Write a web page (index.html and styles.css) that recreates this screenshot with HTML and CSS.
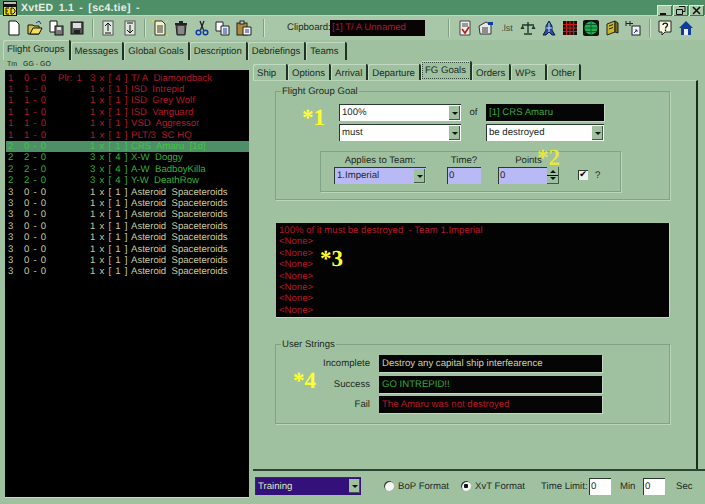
FILE: index.html
```html
<!DOCTYPE html>
<html>
<head>
  <title>XvtED</title>
  <link rel="stylesheet" href="styles.css">
</head>
<body>
  <div class="titlebar">
    <svg class="app-icon" width="14" height="15" viewBox="0 0 14 15"><rect width="14" height="15" fill="#111"/><rect x="1" y="6" width="12" height="8" fill="#e8d820"/><rect x="1" y="1" width="12" height="2" fill="#bbb"/><path d="M3 7v6M3 7h3M3 10h2M3 13h3M8 7v6h2l2-2V9l-2-2z" stroke="#111" fill="none"/></svg>
    <span class="title-text">XvtED 1.1 - [sc4.tie] -</span>
    <div class="win-btns">
      <div class="win-btn"><svg width="15" height="11" viewBox="0 0 15 11"><rect x="3" y="8" width="6" height="2" fill="#111"/></svg></div>
      <div class="win-btn"><svg width="15" height="11" viewBox="0 0 15 11"><path d="M6 1.5h6v5h-2M3.5 4.5h6v5h-6z" stroke="#111" fill="none"/></svg></div>
      <div class="win-btn win-close"><svg width="15" height="11" viewBox="0 0 15 11"><path d="M4 2l7 7M11 2l-7 7" stroke="#111" stroke-width="1.6"/></svg></div>
    </div>
  </div>

  <div class="toolbar">
    <div class="tool-group g-file">
      <svg class="ico" viewBox="0 0 16 16"><path d="M3 1h7l3 3v11H3z" fill="#fff" stroke="#111"/></svg>
      <svg class="ico" viewBox="0 0 16 16"><path d="M1 14V5h5l1 1h5v8z" fill="#d8c040" stroke="#111"/><path d="M3 14l3-6h9l-3 6z" fill="#f0e060" stroke="#111"/><path d="M9 3l3-2 2 3" stroke="#123c9c" fill="none"/></svg>
      <svg class="ico" viewBox="0 0 16 16"><path d="M2 1h7v11H2z" fill="#fff" stroke="#111"/><rect x="7" y="6" width="8" height="9" fill="#777" stroke="#111"/><rect x="9" y="7" width="4" height="3" fill="#ddd"/></svg>
      <svg class="ico" viewBox="0 0 16 16"><rect x="2" y="2" width="12" height="12" fill="#555" stroke="#111"/><rect x="4" y="3" width="8" height="5" fill="#ddd"/><rect x="5" y="10" width="6" height="4" fill="#222"/></svg>
    </div>
    <div class="tool-sep"></div>
    <div class="tool-group g-move">
      <svg class="ico" viewBox="0 0 16 16"><rect x="3" y="1" width="10" height="14" fill="#dfe8df" stroke="#555"/><path d="M8 3v8M5 6l3-3 3 3M5 13h6" stroke="#111" fill="none"/></svg>
      <svg class="ico" viewBox="0 0 16 16"><rect x="3" y="1" width="10" height="14" fill="#dfe8df" stroke="#555"/><path d="M8 5v8M5 10l3 3 3-3M5 3h6" stroke="#111" fill="none"/></svg>
    </div>
    <div class="tool-sep"></div>
    <div class="tool-group g-edit">
      <svg class="ico" viewBox="0 0 16 16"><path d="M0 0l3 3M16 0l-3 3M0 16l3-3M16 16l-3-3" stroke="#e8e040"/><path d="M3 1h7l3 3v11H3z" fill="#f2f2d0" stroke="#333"/><path d="M5 6h6M5 8h6M5 10h6M5 12h6" stroke="#333"/></svg>
      <svg class="ico" viewBox="0 0 16 16"><path d="M6 2h4M2 4h12" stroke="#222" stroke-width="2"/><path d="M3 5h10l-1 10H4z" fill="#555" stroke="#222"/><path d="M6 6v8M8 6v8M10 6v8" stroke="#bbb"/></svg>
      <svg class="ico" viewBox="0 0 16 16"><path d="M6 1l3.500 9M10 1l-3.500 9" stroke="#222" stroke-width="1.300"/><circle cx="4.500" cy="12.500" r="2.300" fill="none" stroke="#123c9c" stroke-width="1.500"/><circle cx="11.500" cy="12.500" r="2.300" fill="none" stroke="#123c9c" stroke-width="1.500"/></svg>
      <svg class="ico" viewBox="0 0 16 16"><path d="M1 2h7v9H1z" fill="#fff" stroke="#222"/><path d="M6 6h8v9H6z" fill="#e8eef0" stroke="#222"/><path d="M8 9h4M8 11h4M8 13h4" stroke="#123c9c"/></svg>
      <svg class="ico" viewBox="0 0 16 16"><rect x="1" y="3" width="10" height="12" fill="#b08a3a" stroke="#222"/><rect x="4" y="1" width="4" height="3" fill="#ccc" stroke="#222"/><path d="M7 7h8v8H7z" fill="#f4f4f4" stroke="#222"/><path d="M9 10h4M9 12h4" stroke="#123c9c"/></svg>
    </div>
    <div class="tool-sep"></div>
    <span class="clip-label">Clipboard:</span>
    <div class="clip-box">[1] T/ A Unnamed</div>
    <div class="tool-sep sep-clip"></div>
    <div class="tool-group g-view">
      <svg class="ico" viewBox="0 0 16 16"><path d="M3 1h10v14H3z" fill="#eee" stroke="#444"/><path d="M5 4h6M5 6h6" stroke="#444"/><path d="M5 9l3 4 4-6" stroke="#c01818" stroke-width="1.600" fill="none"/></svg>
      <svg class="ico" viewBox="0 0 16 16"><path d="M1 6l7-4 5 3v9H2z" fill="#e8e8e8" stroke="#333"/><path d="M4 8h6M4 10h6M4 12h6" stroke="#333"/><path d="M10 2h5v3h-5z" fill="#123c9c"/></svg>
      <span class="lst">.lst</span>
      <svg class="ico" viewBox="0 0 16 16"><path d="M8 2v11M4 14h8M2 5h12" stroke="#1c3a28" stroke-width="1.400"/><path d="M0.500 9l2-4 2 4zM11.500 9l2-4 2 4z" fill="#1c3a28"/></svg>
      <svg class="ico" viewBox="0 0 16 16"><path d="M8 1l3 5v4l3 5h-3l-3-3-3 3H2l3-5V6z" fill="#2a4cb0" stroke="#123"/><path d="M8 3v9M5 8h6" stroke="#cde"/></svg>
      <svg class="ico" viewBox="0 0 16 16"><rect x="1" y="1" width="14" height="14" fill="#111"/><path d="M1 4.500h14M1 8h14M1 11.500h14M4.500 1v14M8 1v14M11.500 1v14" stroke="#d01818" stroke-width="1.200"/></svg>
      <svg class="ico" viewBox="0 0 16 16"><rect width="16" height="16" rx="2" fill="#111"/><circle cx="8" cy="8" r="6.500" fill="#20b050"/><path d="M1.500 8h13M8 1.500v13M3 4.500h10M3 11.500h10" stroke="#0c5c2c"/></svg>
      <svg class="ico" viewBox="0 0 16 16"><path d="M3 4l8-3v11l-8 3z" fill="#c8b828" stroke="#222"/><path d="M11 1l3 2v10l-3-1z" fill="#7a6c14" stroke="#222"/><path d="M5 6l4-1.500M5 9l4-1.500" stroke="#222"/></svg>
      <svg class="ico" viewBox="0 0 16 16"><path d="M1 1v5M5 1v5M1 3.500h4M5 3.500h3" stroke="#222"/><rect x="7" y="6" width="8" height="9" fill="#f2f2f2" stroke="#222"/><path d="M9 13l3-3M10 10h2v2" stroke="#123c9c" fill="none"/></svg>
    </div>
    <div class="tool-sep"></div>
    <div class="tool-group g-help">
      <svg class="ico" viewBox="0 0 16 16"><path d="M2 1h12v11H8l-3 3v-3H2z" fill="#f8f8e0" stroke="#222"/><path d="M6 5c0-2.500 4.500-2.500 4.500 0 0 1.500-2 1.500-2 3.500M8.500 9.500v1.500" stroke="#111" stroke-width="1.300" fill="none"/></svg>
      <svg class="ico" viewBox="0 0 16 16"><path d="M8 1L1 8h2v7h10V8h2z" fill="#123c9c"/><rect x="6" y="9" width="4" height="6" fill="#eee"/></svg>
    </div>
  </div>

  <div class="main-tabs">
    <div class="tab tab-active">Flight Groups</div>
    <div class="tab">Messages</div>
    <div class="tab">Global Goals</div>
    <div class="tab">Description</div>
    <div class="tab">Debriefings</div>
    <div class="tab tab-teams">Teams</div>
  </div>

  <div class="workspace">
    <div class="left-pane">
      <div class="list-head"><span class="tm">Tm</span><span>GG - GO</span></div>
      <div class="fg-list">
        <div class="row red"><span>1</span><span>0 - 0</span><span>Plr: 1</span><span>3 x [ 4 ]</span><span>T/ A&nbsp; Diamondback</span></div>
        <div class="row red"><span>1</span><span>1 - 0</span><span></span><span>1 x [ 1 ]</span><span>ISD&nbsp; Intrepid</span></div>
        <div class="row red"><span>1</span><span>1 - 0</span><span></span><span>1 x [ 1 ]</span><span>ISD&nbsp; Grey Wolf</span></div>
        <div class="row red"><span>1</span><span>1 - 0</span><span></span><span>1 x [ 1 ]</span><span>ISD&nbsp; Vanguard</span></div>
        <div class="row red"><span>1</span><span>1 - 0</span><span></span><span>1 x [ 1 ]</span><span>VSD&nbsp; Aggressor</span></div>
        <div class="row red"><span>1</span><span>1 - 0</span><span></span><span>1 x [ 1 ]</span><span>PLT/3&nbsp; SC HQ</span></div>
        <div class="row green row-sel"><span>2</span><span>0 - 0</span><span></span><span>1 x [ 1 ]</span><span>CRS&nbsp; Amaru&nbsp; [1d]</span></div>
        <div class="row green"><span>2</span><span>2 - 0</span><span></span><span>3 x [ 4 ]</span><span>X-W&nbsp; Doggy</span></div>
        <div class="row green"><span>2</span><span>2 - 0</span><span></span><span>3 x [ 4 ]</span><span>A-W&nbsp; BadboyKilla</span></div>
        <div class="row green"><span>2</span><span>2 - 0</span><span></span><span>3 x [ 4 ]</span><span>Y-W&nbsp; DeathRow</span></div>
        <div class="row pale"><span>3</span><span>0 - 0</span><span></span><span>1 x [ 1 ]</span><span>Asteroid&nbsp; Spaceteroids</span></div>
        <div class="row pale"><span>3</span><span>0 - 0</span><span></span><span>1 x [ 1 ]</span><span>Asteroid&nbsp; Spaceteroids</span></div>
        <div class="row pale"><span>3</span><span>0 - 0</span><span></span><span>1 x [ 1 ]</span><span>Asteroid&nbsp; Spaceteroids</span></div>
        <div class="row pale"><span>3</span><span>0 - 0</span><span></span><span>1 x [ 1 ]</span><span>Asteroid&nbsp; Spaceteroids</span></div>
        <div class="row pale"><span>3</span><span>0 - 0</span><span></span><span>1 x [ 1 ]</span><span>Asteroid&nbsp; Spaceteroids</span></div>
        <div class="row pale"><span>3</span><span>0 - 0</span><span></span><span>1 x [ 1 ]</span><span>Asteroid&nbsp; Spaceteroids</span></div>
        <div class="row pale"><span>3</span><span>0 - 0</span><span></span><span>1 x [ 1 ]</span><span>Asteroid&nbsp; Spaceteroids</span></div>
        <div class="row pale"><span>3</span><span>0 - 0</span><span></span><span>1 x [ 1 ]</span><span>Asteroid&nbsp; Spaceteroids</span></div>
      </div>
    </div>

    <div class="right-pane">
      <div class="sub-tabs">
        <div class="tab tab-ship">Ship</div>
        <div class="tab">Options</div>
        <div class="tab">Arrival</div>
        <div class="tab">Departure</div>
        <div class="tab tab-active tab-focus">FG Goals</div>
        <div class="tab">Orders</div>
        <div class="tab tab-wps">WPs</div>
        <div class="tab">Other</div>
      </div>
      <div class="sub-panel">
        <fieldset class="group goal-group">
          <legend>Flight Group Goal</legend>
          <div class="goal-grid">
            <div class="combo"><span>100%</span><b class="drop"></b></div>
            <span class="of">of</span>
            <div class="black-box green-text">[1] CRS Amaru</div>
            <div class="combo"><span>must</span><b class="drop"></b></div>
            <span></span>
            <div class="combo"><span>be destroyed</span><b class="drop"></b></div>
          </div>
          <div class="team-group">
            <div class="field f-team">
              <label>Applies to Team:</label>
              <div class="combo lilac"><span>1.Imperial</span><b class="drop"></b></div>
            </div>
            <div class="field f-time">
              <label>Time?</label>
              <div class="entry lilac">0</div>
            </div>
            <div class="field f-points">
              <label>Points</label>
              <div class="entry lilac spin-entry">0<b class="spin"></b></div>
            </div>
            <div class="check-wrap"><span class="check">&#10004;</span><span>?</span></div>
          </div>
        </fieldset>

        <div class="goal-list">
          <div>100% of it must be destroyed&nbsp; - Team 1.Imperial</div>
          <div>&lt;None&gt;</div>
          <div>&lt;None&gt;</div>
          <div>&lt;None&gt;</div>
          <div>&lt;None&gt;</div>
          <div>&lt;None&gt;</div>
          <div>&lt;None&gt;</div>
          <div>&lt;None&gt;</div>
        </div>

        <fieldset class="group strings-group">
          <legend>User Strings</legend>
          <div class="string-row"><label>Incomplete</label><div class="black-box pale-text">Destroy any capital ship interfearence</div></div>
          <div class="string-row"><label>Success</label><div class="black-box green-text">GO INTREPID!!</div></div>
          <div class="string-row"><label>Fail</label><div class="black-box red-text">The Amaru was not destroyed</div></div>
        </fieldset>
      </div>
      <div class="bottom-bar">
        <div class="combo purple"><span>Training</span><b class="drop"></b></div>
        <div class="radio-wrap r-bop"><span class="radio"></span>BoP Format</div>
        <div class="radio-wrap r-xvt"><span class="radio radio-on"></span>XvT Format</div>
        <span class="limit-label">Time Limit:</span>
        <div class="entry white-entry">0</div>
        <span class="unit">Min</span>
        <div class="entry white-entry entry-sec">0</div>
        <span class="unit unit-sec">Sec</span>
      </div>
    </div>
  </div>

  <span class="note note-1">*1</span>
  <span class="note note-2">*2</span>
  <span class="note note-3">*3</span>
  <span class="note note-4">*4</span>
</body>
</html>
```

FILE: styles.css
```css
body {
  margin: 0;
  width: 705px;
  height: 504px;
  overflow: hidden;
  position: relative;
  background-color: #a0c1a0;
  font-family: "Liberation Sans", Arial, sans-serif;
  font-size: 9.6px;
  text-rendering: geometricPrecision;
  color: #1d2a1f;
  white-space: nowrap;
}

.titlebar {
  height: 15px;
  display: flex;
  align-items: center;
  background-color: #4f8f67;
  padding-left: 3px;
}
.app-icon {
  margin-top: 2px;
}
.title-text {
  margin-left: 4px;
  color: #e4efe6;
  font-size: 10.5px;
  font-weight: bold;
  letter-spacing: 0.3px;
  word-spacing: 2px;
}
.win-btns {
  margin-left: auto;
  margin-right: 1px;
  margin-top: 6px;
  display: flex;
  gap: 1px;
}
.win-btn {
  width: 15px;
  height: 11px;
  background-color: #a9c8aa;
  box-shadow: inset 1px 1px #dcebdc, inset -1px -1px #4c6a50;
  display: flex;
}

.toolbar {
  height: 25px;
  display: flex;
  align-items: center;
  padding-left: 6px;
  background-color: #a8c7a8;
  box-shadow: inset 0 1px #bcd6bc;
}
.tool-group {
  display: flex;
  align-items: center;
}
.ico {
  width: 16px;
  height: 16px;
  flex: none;
}
.g-file { gap: 5px; width: 80px; }
.g-move { gap: 6px; margin-left: 6px; width: 38px; }
.g-edit { gap: 5px; margin-left: 6px; width: 105px; }
.g-view { gap: 5px; margin-left: 7px; width: 186px; }
.g-help { gap: 5px; margin-left: 6px; }
.tool-sep {
  width: 2px;
  height: 18px;
  margin-left: 6px;
  background: linear-gradient(to right, #7f9f82 50%, #cfe2cf 50%);
}
.sep-clip {
  margin-left: 23px;
}
.clip-label {
  margin-left: 22px;
  width: 40px;
}
.clip-box {
  margin-left: 3px;
  width: 93px;
  height: 16px;
  line-height: 16px;
  background-color: #0a0306;
  color: #a8182c;
  padding-left: 2px;
}
.lst {
  width: 16px;
  font-size: 9px;
  color: #35513d;
  text-align: center;
}

.tab {
  padding: 4px 4px 0 4px;
  border-right: 2px solid #1f3324;
  box-shadow: inset 1px 1px #c2dac2;
  border-radius: 2px 2px 0 0;
}
.main-tabs {
  height: 20px;
  display: flex;
  padding-left: 3px;
}
.main-tabs .tab {
  margin-top: 2px;
  height: 14px;
}
.main-tabs .tab-active {
  margin-top: 0;
  height: 16px;
}
.main-tabs .tab-teams {
  padding-right: 6px;
}

.workspace {
  display: flex;
  height: 444px;
}
.left-pane {
  width: 253px;
  padding-left: 5px;
  box-sizing: border-box;
}
.list-head {
  height: 10px;
  display: flex;
  font-size: 7px;
  line-height: 9px;
  padding-left: 2px;
}
.list-head .tm {
  width: 16px;
}
.fg-list {
  width: 244px;
  height: 427px;
  background-color: #000;
  padding-top: 2.500px;
  box-sizing: border-box;
  box-shadow: 0 1px #c2dac2;
}
.row {
  height: 11.42px;
  line-height: 11.42px;
  display: grid;
  grid-template-columns: 16px 34px 32px 41px auto;
  padding-left: 3px;
  word-spacing: 1.500px;
}
.row span:last-child {
  word-spacing: 0;
}
.red { color: #b3182c; }
.green { color: #35b03c; }
.pale { color: #c8ca9c; }
.row-sel {
  background-color: #4f8f67;
  color: #3fc548;
  margin-left: 1px;
  padding-left: 2px;
}

.right-pane {
  width: 452px;
  display: flex;
  flex-direction: column;
}
.sub-tabs {
  height: 20px;
  display: flex;
}
.sub-tabs .tab {
  margin-top: 4px;
  height: 12px;
}
.sub-tabs .tab-ship {
  width: 25px;
}
.sub-tabs .tab-wps {
  width: 26px;
}
.sub-tabs .tab-focus {
  margin-top: 1px;
  height: 15px;
  outline: 1px dotted #33483a;
  outline-offset: -2px;
}
.sub-panel {
  width: 445px;
  height: 389px;
  box-sizing: border-box;
  border-right: 2px solid #1a2a1f;
  border-top: 1px solid #bcd6bc;
  padding: 4px 0 0 22px;
}

.group {
  margin: 0;
  padding: 0;
  width: 395px;
  box-sizing: border-box;
  border: 1px solid #7fa384;
  box-shadow: 1px 1px #bcd6bc;
}
.group legend {
  margin-left: 5px;
  padding: 0 1px;
  line-height: 13px;
}
.goal-group {
  height: 115px;
}
.goal-grid {
  display: grid;
  grid-template-columns: 122px 25px 118px;
  grid-template-rows: 17px 17px;
  row-gap: 3px;
  margin: 6px 0 0 63px;
  align-items: center;
}
.of {
  text-align: center;
}

.combo {
  height: 17px;
  box-sizing: border-box;
  background-color: #fff;
  display: flex;
  align-items: center;
  justify-content: space-between;
  padding-left: 3px;
  box-shadow: inset 1px 1px #2a3a2e;
}
.drop {
  width: 11px;
  height: 14px;
  margin-right: 1px;
  background-color: #a0c1a0;
  box-shadow: inset -1px -1px #3f5a45;
  position: relative;
}
.drop::after {
  content: "";
  position: absolute;
  left: 3px;
  top: 6px;
  border: 3px solid transparent;
  border-top-color: #111;
  border-bottom: 0;
}
.combo.lilac, .lilac {
  background-color: #b9b9f5;
}
.black-box {
  background-color: #050505;
  height: 17px;
  line-height: 17px;
  padding-left: 3px;
  box-sizing: border-box;
  box-shadow: 1px 1px #c2dac2;
}
.green-text { color: #35a83c; }
.pale-text { color: #d0d0a4; }
.red-text { color: #b3182c; }

.team-group {
  width: 301px;
  height: 41px;
  margin: 10px 0 0 44px;
  box-sizing: border-box;
  border: 1px solid #7fa384;
  box-shadow: 1px 1px #bcd6bc;
  display: flex;
  padding-left: 13px;
}
.field {
  display: flex;
  flex-direction: column;
}
.field label {
  height: 15px;
  line-height: 17px;
  text-align: center;
}
.f-team { width: 92px; }
.f-time { width: 34px; margin-left: 21px; }
.f-points { width: 61px; margin-left: 17px; }
.entry {
  height: 17px;
  line-height: 17px;
  padding-left: 2px;
  box-sizing: border-box;
  box-shadow: inset 1px 1px #2a3a2e;
}
.spin-entry {
  display: flex;
  justify-content: space-between;
}
.spin {
  width: 12px;
  height: 17px;
  background-color: #a0c1a0;
  box-shadow: inset -1px -1px #3f5a45;
  background-image: linear-gradient(#111, #111);
  background-size: 12px 1px;
  background-position: 0 8px;
  background-repeat: no-repeat;
  position: relative;
}
.spin::before, .spin::after {
  content: "";
  position: absolute;
  left: 3px;
  border: 3px solid transparent;
}
.spin::before {
  top: 1px;
  border-bottom-color: #111;
  border-top: 0;
  margin-top: 2px;
}
.spin::after {
  top: 10px;
  border-top-color: #111;
  border-bottom: 0;
}
.check-wrap {
  margin: 17px 0 0 19px;
  display: flex;
  gap: 7px;
  align-items: center;
  height: 12px;
}
.check {
  width: 10px;
  height: 10px;
  background-color: #eef2ee;
  box-shadow: inset 1px 1px #2a3a2e;
  font-family: "DejaVu Sans", sans-serif;
  font-size: 9px;
  line-height: 10px;
  color: #000;
  text-align: center;
}

.goal-list {
  width: 393px;
  height: 94px;
  margin: 23px 0 0 1px;
  box-sizing: border-box;
  background-color: #030303;
  color: #b3182c;
  padding: 2px 0 0 3px;
  line-height: 11.4px;
  box-shadow: 0 1px #c2dac2, 1px 0 #c2dac2;
}

.strings-group {
  height: 86px;
  margin: 21px 0 0 0;
}
.string-row {
  display: flex;
  align-items: center;
  height: 17px;
  margin-bottom: 3.500px;
}
.string-row:first-of-type {
  margin-top: 4px;
}
.string-row label {
  width: 94px;
  text-align: right;
}
.string-row .black-box {
  width: 223px;
  margin-left: 9px;
}

.bottom-bar {
  height: 35px;
  box-sizing: border-box;
  border-top: 2px solid #2b4433;
  display: flex;
  align-items: center;
  padding: 0 0 3px 2px;
}
.purple {
  width: 106px;
  height: 18px;
  flex: none;
  background-color: #33107a;
  color: #dfe8c8;
}
.radio-wrap {
  display: flex;
  align-items: center;
  gap: 4px;
  width: 63px;
  flex: none;
}
.r-bop { margin-left: 23px; }
.r-xvt { margin-left: 14px; }
.radio {
  width: 10px;
  height: 10px;
  flex: none;
  border-radius: 50%;
  background-color: #f4f6f4;
  box-shadow: inset 1px 1px #2a3a2e;
  box-sizing: border-box;
}
.radio-on {
  background: radial-gradient(circle, #111 2px, #f4f6f4 2.5px);
}
.limit-label {
  margin-left: 17px;
  width: 42px;
  flex: none;
}
.white-entry {
  width: 22px;
  flex: none;
  background-color: #fff;
  margin-left: 6px;
}
.entry-sec { margin-left: 8px; }
.unit {
  margin-left: 9px;
  width: 15px;
  flex: none;
}
.unit-sec { margin-left: 11px; }

.note {
  position: absolute;
  font-family: "Liberation Serif", serif;
  font-weight: bold;
  font-size: 23px;
  line-height: 24px;
  color: #ffff30;
}
.note-1 { left: 302px; top: 106px; }
.note-2 { left: 537px; top: 146px; color: #e6e83c; }
.note-3 { left: 320px; top: 247px; }
.note-4 { left: 293px; top: 369px; }
```
